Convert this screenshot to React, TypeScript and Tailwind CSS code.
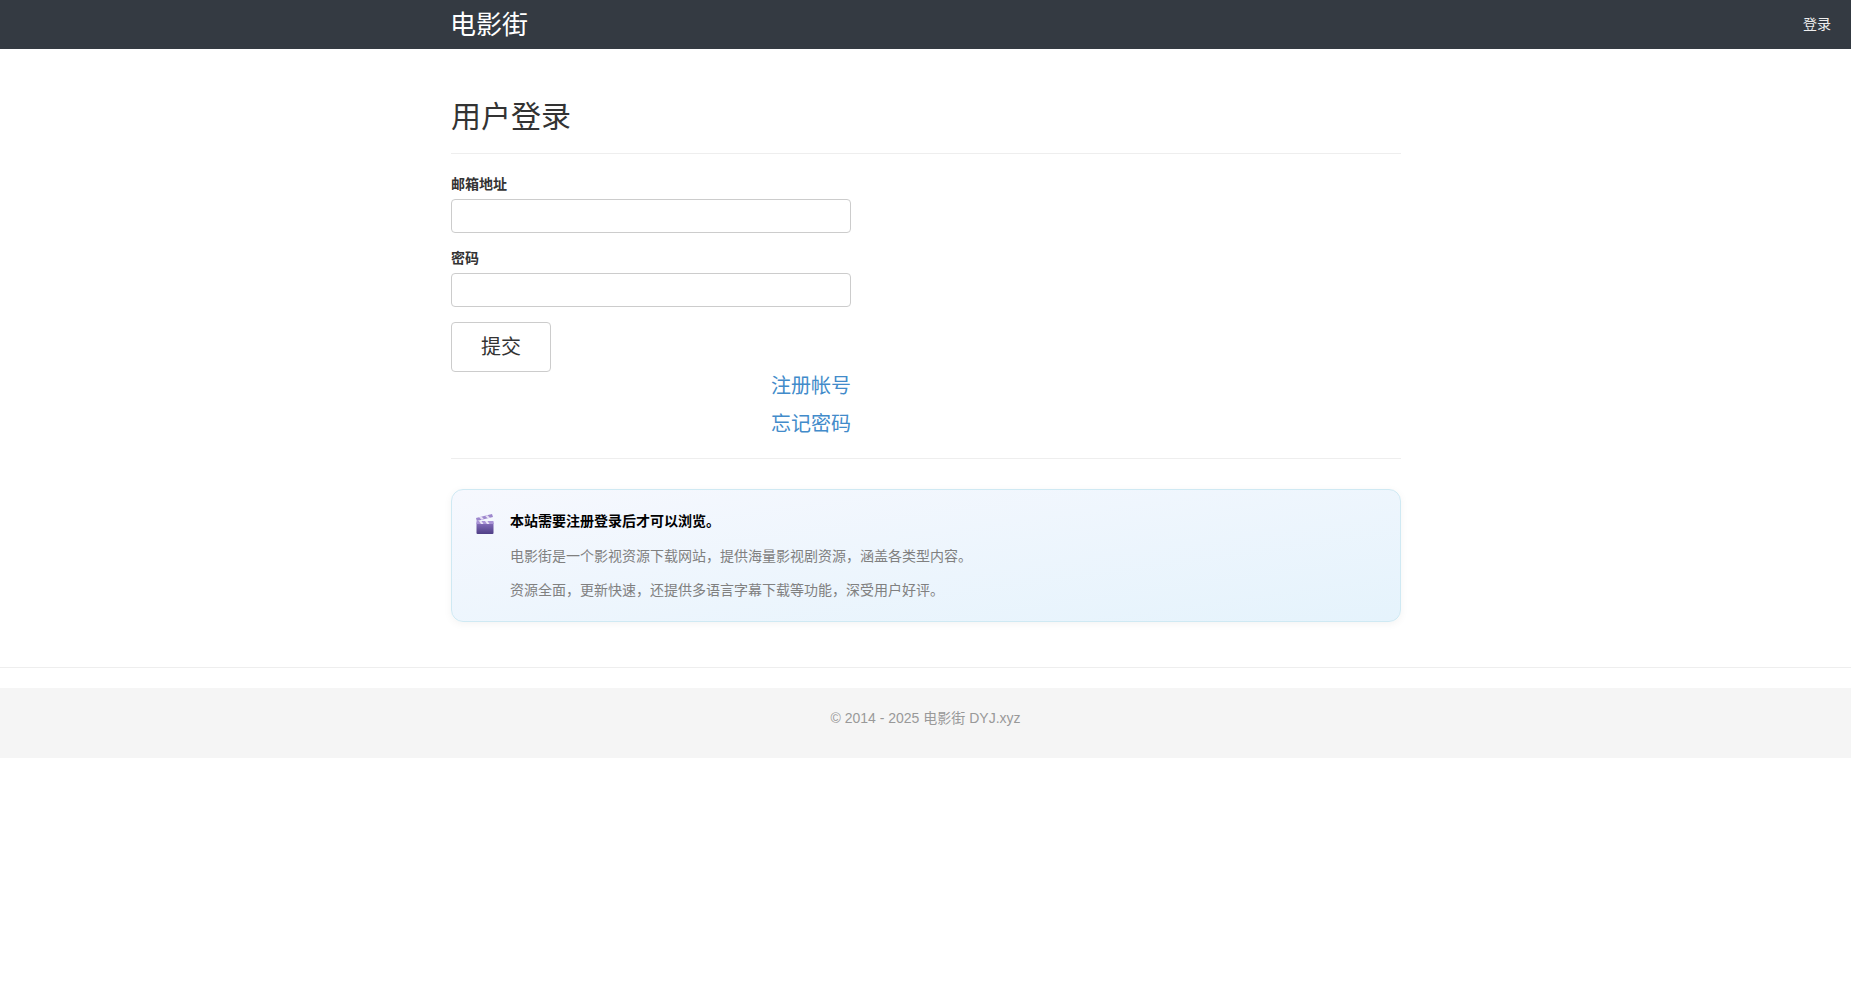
const ff = '"Liberation Sans", "Noto Sans CJK SC", sans-serif';

function Clapper() {
  return (
    <svg width="18" height="20" viewBox="0 0 18 20" className="block">
      <defs>
        <linearGradient id="clapBody" x1="0" y1="0" x2="0" y2="1">
          <stop offset="0" stopColor="#8a72c0" />
          <stop offset="1" stopColor="#4f3f86" />
        </linearGradient>
      </defs>
      <rect x="0.5" y="8" width="17" height="12" rx="1" fill="url(#clapBody)" />
      <path d="M0.5 7H17.5V10H0.5Z" fill="#a993d6" />
      <path d="M3 7L5 10H7.5L5.5 7ZM9 7L11 10H13.5L11.5 7Z" fill="#ece6f7" />
      <path d="M0 3.9L16 0L17 3L0.8 6.9Z" fill="#9d87cd" />
      <path d="M3 3.2L5.5 5.8L8 5.2L5.5 2.6ZM9 1.8L11.5 4.3L14 3.7L11.5 1.2Z" fill="#e6dff5" />
    </svg>
  );
}

export default function App() {
  return (
    <div style={{ fontFamily: ff }} className="text-[14px] leading-[20px] text-[#333] bg-white min-h-[983px]">
      <nav className="h-[49px] bg-[#343a42] flex justify-between pl-[450px] pr-[20px]">
        <a className="text-white text-[26px] leading-[51px]">电影街</a>
        <a className="text-[14px] leading-[49px] text-[#eee]">登录</a>
      </nav>
      <main className="w-[950px] ml-[451px]">
        <h1 className="mt-[51px] mb-[20px] pb-[20px] text-[30px] leading-[33px] font-normal border-b border-[#eee]">用户登录</h1>
        <form className="w-[400px]">
          <label className="block font-bold mb-[5px]">邮箱地址</label>
          <input className="block w-full h-[34px] border border-[#ccc] rounded-[4px] mb-[15px]" />
          <label className="block font-bold mb-[5px]">密码</label>
          <input className="block w-full h-[34px] border border-[#ccc] rounded-[4px] mb-[15px]" />
          <button type="button" className="block w-[100px] h-[50px] border border-[#ccc] rounded-[4px] text-[20px] leading-[26px] text-[#333] bg-white">提交</button>
          <div className="flex flex-col items-end gap-[12px] mt-[1px] text-[20px] leading-[26px] text-[#428bca]">
            <a>注册帐号</a>
            <a>忘记密码</a>
          </div>
        </form>
        <hr className="mt-[21px] mb-[30px] border-0 border-t border-[#eee]" />
        <section className="flex h-[133px] pl-[24px] pr-[20px] pt-[21px] pb-[20px] rounded-[12px] border border-[#cfe9f3] bg-gradient-to-br from-[#f6f8fe] to-[#e5f3fc] shadow-[0_2px_8px_rgba(0,0,0,0.05)]">
          <div className="w-[18px] mt-[3px] mr-[16px] shrink-0">
            <Clapper />
          </div>
          <div>
            <p className="font-bold text-black mb-[15px]">本站需要注册登录后才可以浏览。</p>
            <p className="text-[#808080] mb-[14px]">电影街是一个影视资源下载网站，提供海量影视剧资源，涵盖各类型内容。</p>
            <p className="text-[#808080]">资源全面，更新快速，还提供多语言字幕下载等功能，深受用户好评。</p>
          </div>
        </section>
      </main>
      <footer className="mt-[45px] border-t border-[#eee] pt-[20px]">
        <div className="h-[70px] bg-[#f5f5f5] pt-[20px] text-center text-[#999]">© 2014 - 2025 电影街 DYJ.xyz</div>
      </footer>
    </div>
  );
}
